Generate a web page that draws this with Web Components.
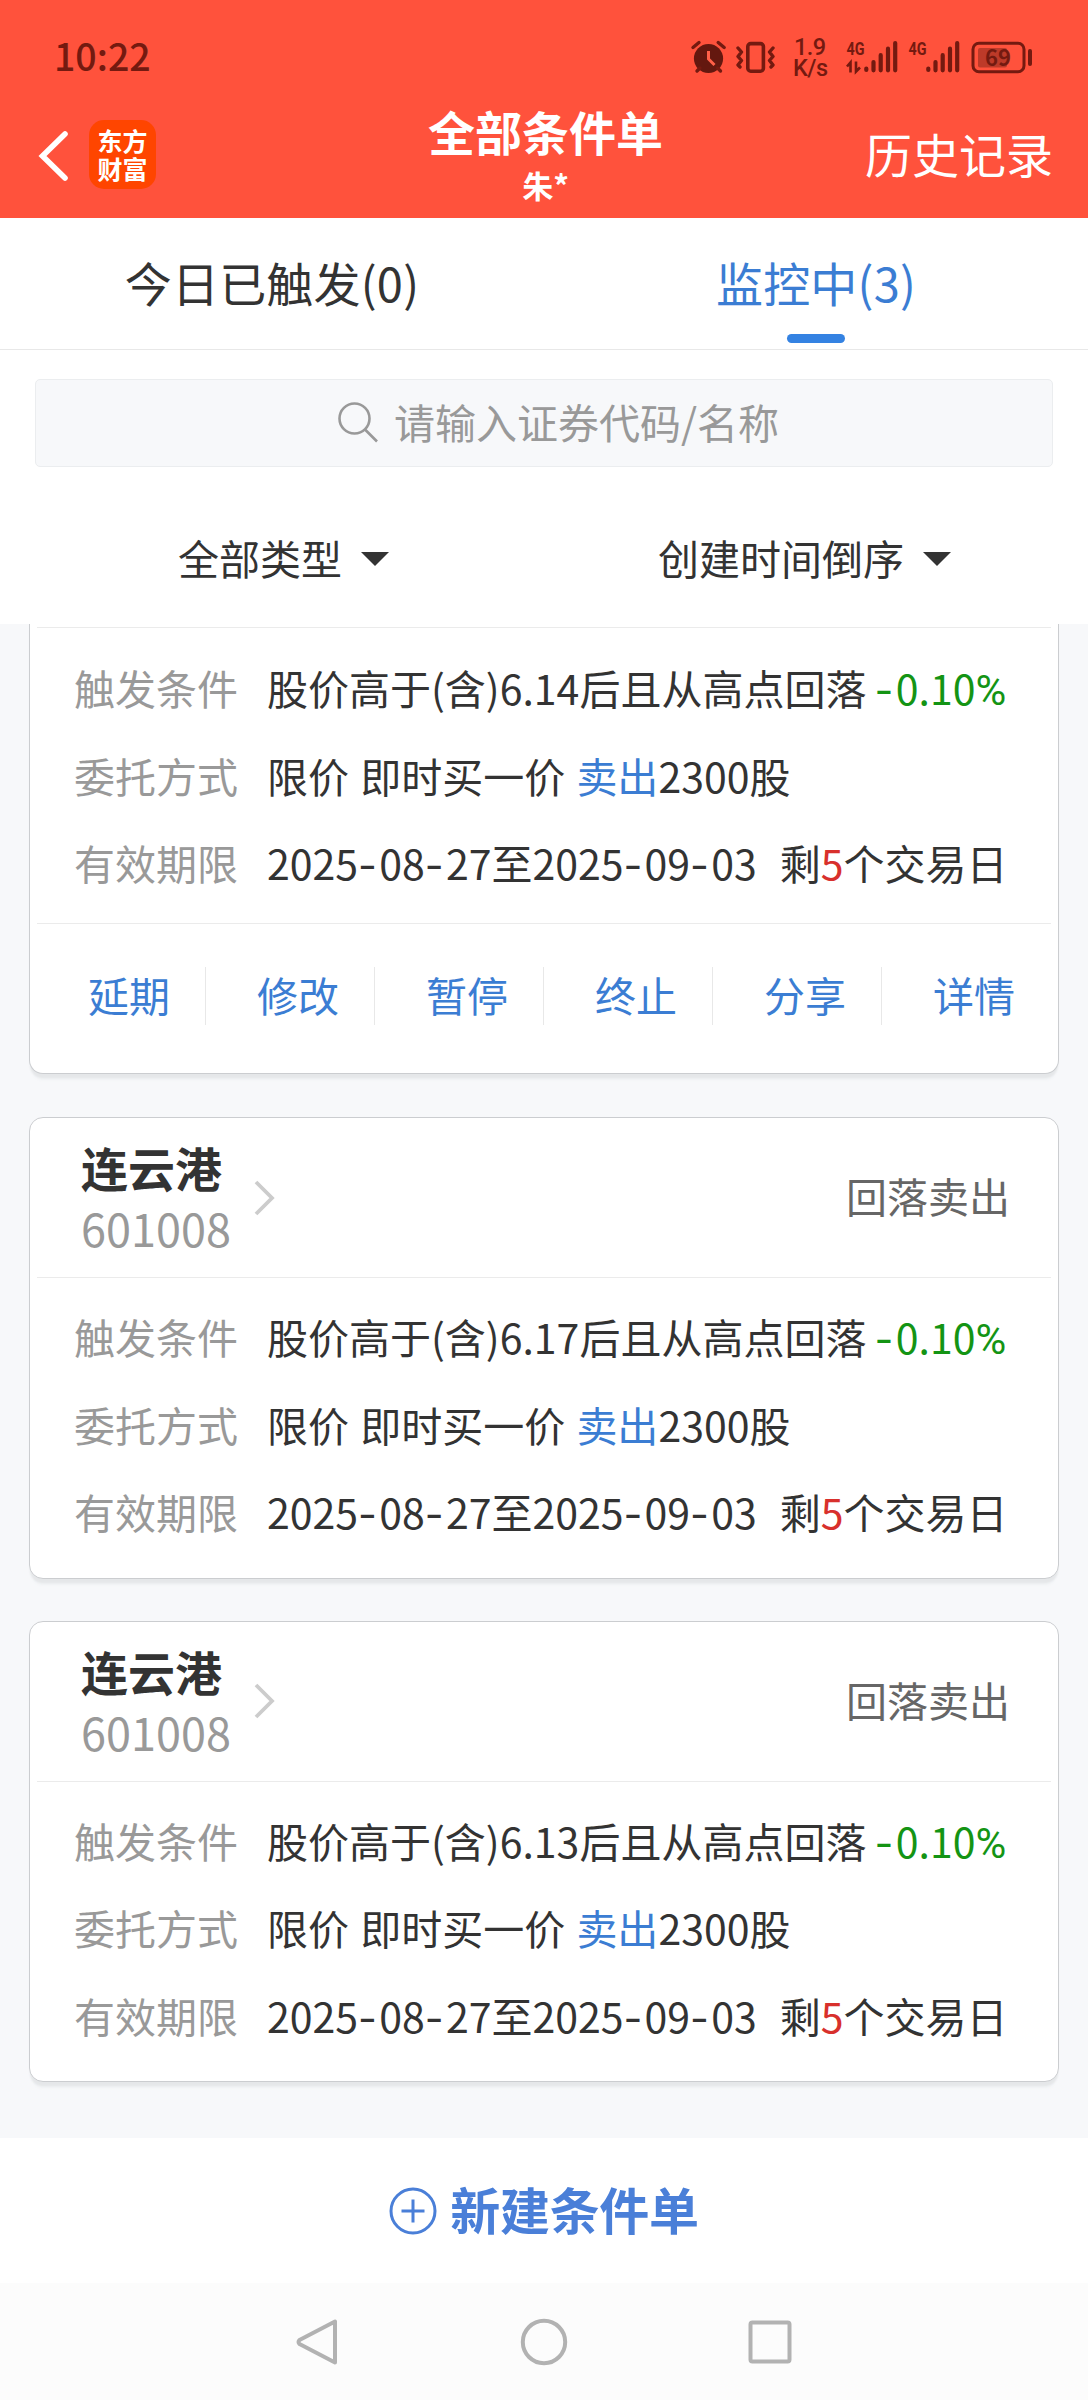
<!DOCTYPE html>
<html lang="zh-CN">
<head>
<meta charset="utf-8">
<title>全部条件单</title>
<style>
  body {
    margin: 0;
    width: 1088px;
    background: #f7f8fa;
    color: #333;
    font-family: "Noto Sans CJK SC", sans-serif;
    font-size: 41px;
  }
</style>
</head>
<body>
<order-app></order-app>

<script>
// attach an open shadow root with the given markup
class BaseElement extends HTMLElement {
  render(html) {
    const template = document.createElement("template");
    template.innerHTML = html;
    this.attachShadow({ mode: "open" });
    this.shadowRoot.appendChild(template.content.cloneNode(true));
  }
}

class StatusBar extends BaseElement {
  constructor() {
    super();
    this.render(`
      <style>
        :host {
          display: flex;
          align-items: center;
          justify-content: space-between;
          height: 94px;
          padding: 22px 54px 0 54px;
          box-sizing: border-box;
          color: #741a10;
          --bar: #741a10;
        }
        .time {
          font-size: 37.500px;
          font-weight: 500;
          line-height: 60px;
          margin-top: -7px;
        }
        svg { display: block; overflow: visible; }
        text { fill: var(--bar); }
      </style>
      <div class="time">10:22</div>
      <svg width="344" height="44" viewBox="690 36 344 44" fill="none" stroke="#741a10">
        <g>
          <circle cx="708.5" cy="58.5" r="14.6" fill="#64180f" stroke="none"/>
          <path d="M693 47.500l6-5M724.200 47.500l-6-5M697 71l3-3M720.500 71l-3-3" stroke-width="3.400" stroke-linecap="round"/>
          <path d="M708.500 51v8l6 6" stroke="#ff6048" stroke-width="3"/>
        </g>
        <g>
          <rect x="747.800" y="43.600" width="15.600" height="27.600" rx="3" stroke-width="3.600"/>
          <path d="M738 48l3.500 4-3.500 4.500 3.500 4-3.500 4.500 2 2M773 48l-3.500 4 3.500 4.500-3.500 4 3.500 4.500-2 2" stroke-width="3.400" stroke-linejoin="round" stroke-linecap="round"/>
        </g>
        <g stroke="none" font-family="Roboto, sans-serif" font-size="23.500" font-weight="500">
          <text x="794" y="55" textLength="32">1.9</text>
          <text x="793" y="76" textLength="35">K/s</text>
        </g>
        <g stroke="none" font-family="Roboto, sans-serif" font-size="19" font-weight="700">
          <text x="846.500" y="54.500" textLength="18" lengthAdjust="spacingAndGlyphs">4G</text>
          <text x="908.500" y="54.500" textLength="18" lengthAdjust="spacingAndGlyphs">4G</text>
        </g>
        <path d="M850.500 72.500v-10l-3.500 4M856 61.500v10l4-4" stroke-width="2.600"/>
        <g stroke-width="4.200" stroke-linecap="round">
          <path d="M866.300 68.500v1.500M873.500 62v8.300M880.700 55.200v15.100M888 48.700v21.600M895.200 43.100v27.200"/>
          <path d="M928.300 68.500v1.500M935.500 62v8.300M942.700 55.200v15.100M950 48.700v21.600M957.200 43.100v27.200"/>
        </g>
        <rect x="973" y="43.300" width="51" height="28.400" rx="6" stroke-width="3"/>
        <rect x="978" y="48" width="29" height="19.500" rx="2" fill="#bd3a29" stroke="none"/>
        <path d="M1030 51v13" stroke-width="4" stroke-linecap="round"/>
        <text x="985" y="66" font-size="22" font-weight="700" textLength="26" stroke="none">69</text>
      </svg>
    `);
  }
}

class NavHeader extends BaseElement {
  constructor() {
    super();
    this.render(`
      <style>
        :host {
          display: grid;
          grid-template-columns: 1fr auto 1fr;
          height: 124px;
          color: #fff;
        }
        .left {
          display: flex;
          align-items: flex-start;
          padding: 26px 0 0 37px;
          gap: 20px;
        }
        .back { margin-top: 9px; }
        .logo {
          width: 67px;
          height: 69px;
          border-radius: 15px;
          background: #ff4500;
          display: flex;
          flex-direction: column;
          align-items: center;
          justify-content: center;
          font-size: 25px;
          font-weight: 700;
          line-height: 28.500px;
          padding-bottom: 1px;
          box-sizing: border-box;
        }
        .title { text-align: center; font-weight: 700; padding-left: 3px; }
        .title h1 {
          margin: 6px 0 0;
          font-size: 47px;
          line-height: 62px;
        }
        .title p {
          margin: 0;
          font-size: 31px;
          line-height: 40px;
          padding-top: 3px;
        }
        .history {
          text-align: right;
          padding-right: 35px;
          font-size: 47px;
          line-height: 117px;
        }
      </style>
      <div class="left">
        <svg class="back" width="32" height="54" viewBox="0 0 32 54" fill="none" stroke="#fff" stroke-width="5.600">
          <path d="M28 5L5.500 27 28 49" stroke-linecap="round"/>
        </svg>
        <div class="logo"><span>东方</span><span>财富</span></div>
      </div>
      <div class="title">
        <h1>全部条件单</h1>
        <p>朱*</p>
      </div>
      <div class="history">历史记录</div>
    `);
  }
}

class TabItem extends BaseElement {
  constructor() {
    super();
    this.render(`
      <style>
        :host {
          flex: 1;
          display: flex;
          flex-direction: column;
          align-items: center;
          font-size: 47px;
        }
        .label { line-height: 116px; margin-top: 6px; letter-spacing: .2px; }
        .line { width: 58px; height: 9px; margin-top: -6px; border-radius: 5px; }
        :host([active]) { color: #3b7dd3; }
        :host([active]) .line { background: #3482e2; }
      </style>
      <div class="label"><slot></slot></div>
      <div class="line"></div>
    `);
  }
}

class SearchBox extends BaseElement {
  constructor() {
    super();
    this.render(`
      <style>
        :host {
          display: flex;
          align-items: center;
          justify-content: center;
          gap: 15px;
          height: 88px;
          margin: 0 35px;
          padding-left: 28px;
          box-sizing: border-box;
          border: 1.500px solid #ebedef;
          border-radius: 5px;
          background: #f7f8fa;
          color: #999;
        }
        svg { margin-top: -2px; }
        span { line-height: 60px; margin-top: -5px; }
      </style>
      <svg width="42" height="42" viewBox="0 0 42 42" fill="none" stroke="#999" stroke-width="2.600">
        <circle cx="17.500" cy="17.500" r="15"/>
        <path d="M28 28.500l12 12"/>
      </svg>
      <span><slot></slot></span>
    `);
  }
}

class FilterItem extends BaseElement {
  constructor() {
    super();
    this.render(`
      <style>
        :host {
          display: flex;
          align-items: center;
          gap: 19px;
          line-height: 60px;
        }
        i {
          border: 14px solid transparent;
          border-top: 14px solid #333;
          border-bottom: 0;
          margin-top: 3px;
        }
      </style>
      <slot></slot><i></i>
    `);
  }
}

class OrderCard extends BaseElement {
  constructor() {
    super();
    const price = this.getAttribute("price");
    // wide hyphens between the date parts
    const date = (s) => s.replace(/-/g, "<s>-</s>");
    this.render(`
      <style>
        :host {
          display: block;
          box-sizing: border-box;
          margin: 0 29px 42px;
          padding: 0 7px;
          background: #fff;
          border: 1px solid #cbcdd0;
          border-radius: 14px;
          box-shadow: 0 5px 2px -1px #e5e7e9, 0 9px 3px -3px #f0f2f4;
        }
        :host([continued]) {
          border-top: 0;
          border-radius: 0 0 14px 14px;
          padding-top: 3px;
          margin-bottom: 43px;
        }
        header {
          display: flex;
          align-items: center;
          height: 159px;
          padding: 0 41px 0 44px;
        }
        :host([continued]) header { display: none; }
        h2 {
          margin: 0;
          font-size: 47px;
          line-height: 62px;
        }
        .code {
          font-size: 45px;
          line-height: 62px;
          color: #999;
          margin-top: -1px;
        }
        .arrow { margin: 0 auto 0 22px; }
        .type { color: #666; line-height: 60px; margin-top: -5px; }
        .rows {
          border-top: 1px solid #ebebeb;
          padding: 15px 0 0 37px;
          height: 300.500px;
          box-sizing: border-box;
          line-height: 87.500px;
        }
        :host([continued]) .rows { height: 296px; padding-top: 16px; }
        .row { display: flex; height: 87.500px; white-space: pre; }
        .row label { width: 193px; color: #999; }
        .row div { word-spacing: 2px; }
        s, .down i { line-height: 0; }
        s { font-family: Inter, sans-serif; text-decoration: none; letter-spacing: 2.300px; }
        .down { color: #149414; margin-left: -3px; }
        .down i { font-family: Roboto, sans-serif; font-style: normal; font-size: 42px; }
        .sell { color: #3b7dd3; }
        .left { color: #d8302c; }
        .expire { margin-left: 23px; }
      </style>
      <header>
        <div>
          <h2>连云港</h2>
          <div class="code">601008</div>
        </div>
        <svg class="arrow" width="24" height="38" viewBox="0 0 24 38" fill="none" stroke="#ccc" stroke-width="3.800">
          <path d="M3 3l16 16L3 35"/>
        </svg>
        <div class="type">回落卖出</div>
      </header>
      <div class="rows">
        <div class="row"><label>触发条件</label><div>股价高于(含)${price}后且从高点回落 <span class="down"><s>-</s>0.10<i>%</i></span></div></div>
        <div class="row"><label>委托方式</label><div>限价 即时买一价 <span class="sell">卖出</span>2300股</div></div>
        <div class="row"><label>有效期限</label><div>${date("2025-08-27至2025-09-03")}<span class="expire">剩<span class="left">5</span>个交易日</span></div></div>
      </div>
      <slot></slot>
    `);
  }
}

class CardActions extends BaseElement {
  constructor() {
    super();
    const items = ["延期", "修改", "暂停", "终止", "分享", "详情"];
    this.render(`
      <style>
        :host {
          display: flex;
          align-items: flex-start;
          height: 150px;
          border-top: 1px solid #ebebeb;
          padding-top: 43px;
          box-sizing: border-box;
          color: #3b7dd3;
        }
        div {
          flex: none;
          width: 117px;
          height: 58px;
          line-height: 54px;
          padding-left: 51px;
          border-right: 1px solid #e8e8e8;
        }
        div:last-child { border: 0; width: 90px; }
      </style>
      ${items.map((item) => `<div>${item}</div>`).join("")}
    `);
  }
}

class NewOrder extends BaseElement {
  constructor() {
    super();
    this.render(`
      <style>
        :host {
          display: flex;
          align-items: center;
          justify-content: center;
          gap: 13px;
          height: 145px;
          background: #fff;
          color: #4a7fd8;
          font-size: 50px;
          font-weight: 700;
        }
        span { line-height: 70px; margin-top: -6px; letter-spacing: -.3px; }
      </style>
      <svg width="48" height="48" viewBox="0 0 48 48" fill="none" stroke="#4a7fd8" stroke-width="3">
        <circle cx="24" cy="24" r="22"/>
        <path d="M12.500 24h23M24 12.500v23"/>
      </svg>
      <span><slot></slot></span>
    `);
  }
}

class SystemNav extends BaseElement {
  constructor() {
    super();
    this.render(`
      <style>
        :host {
          display: flex;
          align-items: center;
          justify-content: center;
          gap: 178px;
          height: 117px;
          background: #fcfcfc;
        }
      </style>
      <svg width="48" height="48" viewBox="0 0 48 48" fill="none" stroke="#b2b2b2" stroke-width="4">
        <path d="M41 3.500v41L5.500 26q-2-2 0-4z" stroke-linejoin="round"/>
      </svg>
      <svg width="48" height="48" viewBox="0 0 48 48" fill="none" stroke="#b2b2b2" stroke-width="4">
        <circle cx="24" cy="24" r="21.200"/>
      </svg>
      <svg width="48" height="48" viewBox="0 0 48 48" fill="none" stroke="#b2b2b2" stroke-width="4">
        <rect x="4.500" y="4.500" width="39" height="39" rx="2"/>
      </svg>
    `);
  }
}

class OrderApp extends BaseElement {
  constructor() {
    super();
    this.render(`
      <style>
        :host { display: flex; flex-direction: column; height: 2400px; }
        .top { background: #ff523c; }
        .panel { background: #fff; height: 406px; }
        .tabs {
          display: flex;
          height: 132px;
          box-sizing: border-box;
          border-bottom: 1px solid #e8e8e8;
          margin-bottom: 29px;
        }
        .filters {
          display: flex;
          justify-content: space-between;
          padding: 60px 137px 0 178px;
        }
        .list { flex: 1; overflow: hidden; }
      </style>
      <div class="top">
        <status-bar></status-bar>
        <nav-header></nav-header>
      </div>
      <div class="panel">
        <div class="tabs">
          <tab-item>今日已触发(0)</tab-item>
          <tab-item active>监控中(3)</tab-item>
        </div>
        <search-box>请输入证券代码/名称</search-box>
        <div class="filters">
          <filter-item>全部类型</filter-item>
          <filter-item>创建时间倒序</filter-item>
        </div>
      </div>
      <div class="list">
        <order-card price="6.14" continued><card-actions></card-actions></order-card>
        <order-card price="6.17"></order-card>
        <order-card price="6.13"></order-card>
      </div>
      <new-order>新建条件单</new-order>
      <system-nav></system-nav>
    `);
  }
}

window.customElements.define("status-bar", StatusBar);
window.customElements.define("nav-header", NavHeader);
window.customElements.define("tab-item", TabItem);
window.customElements.define("search-box", SearchBox);
window.customElements.define("filter-item", FilterItem);
window.customElements.define("card-actions", CardActions);
window.customElements.define("order-card", OrderCard);
window.customElements.define("new-order", NewOrder);
window.customElements.define("system-nav", SystemNav);
window.customElements.define("order-app", OrderApp);
</script>
</body>
</html>
